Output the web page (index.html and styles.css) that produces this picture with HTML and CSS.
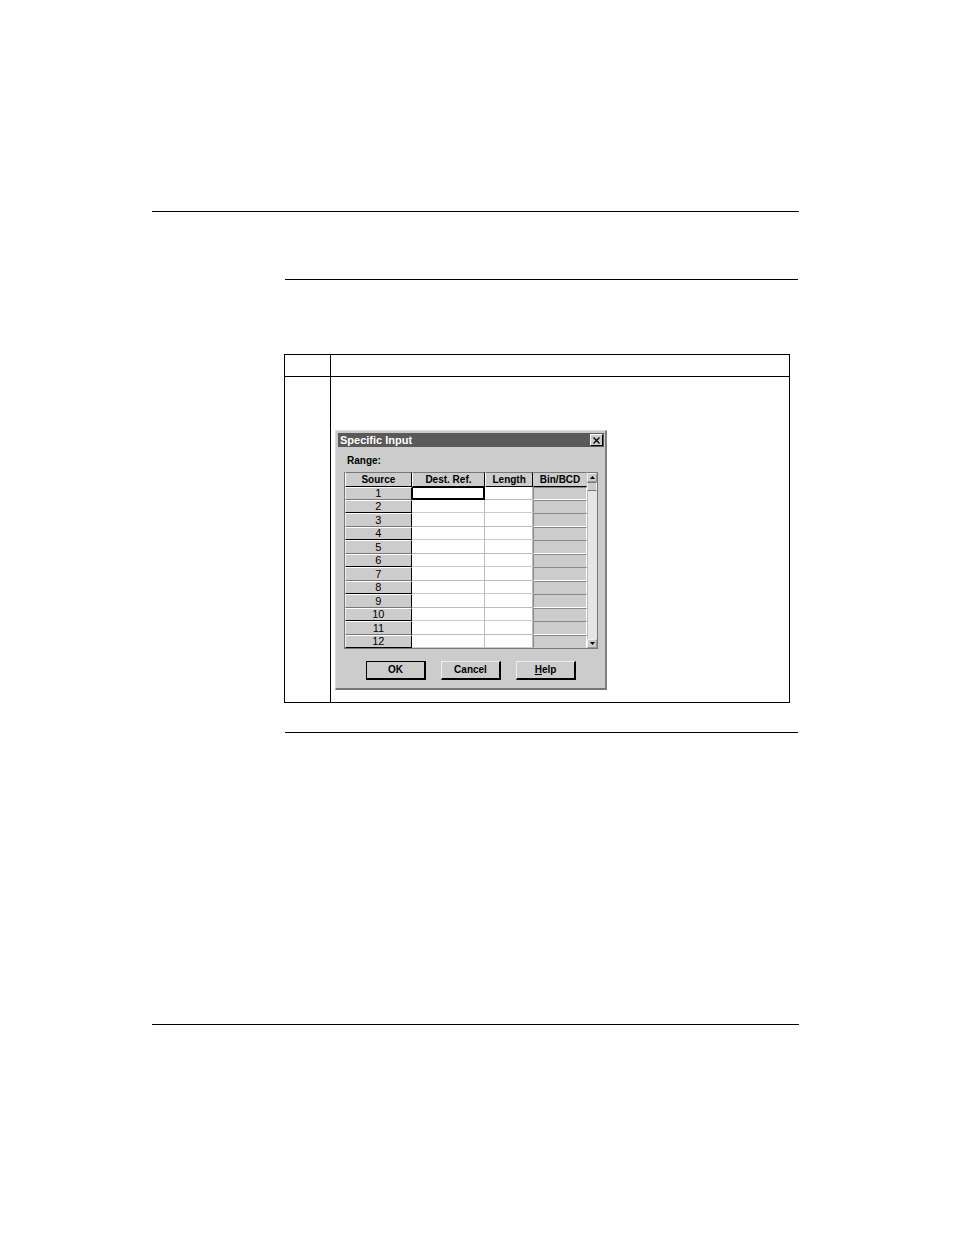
FILE: index.html
```html
<!DOCTYPE html>
<html lang="en">
<head>
<meta charset="utf-8">
<title>Specific Input</title>
<link rel="stylesheet" href="styles.css">
</head>
<body>
<main class="page">
  <div class="content">
    <section class="steps">
      <div class="steps-head"><div class="step-number"></div><div class="step-action"></div></div>
      <div class="steps-row">
        <div class="step-number"></div>
        <div class="step-action">
          <form class="dialog">
            <header class="title-bar">
              <h1 class="title">Specific Input</h1>
              <button class="close" type="button" aria-label="Close"><svg width="7" height="7" viewBox="0 0 7 7"><path d="M.5 .5L6.5 6.5M6.5 .5L.5 6.5" stroke="#000" stroke-width="1.3"/></svg></button>
            </header>
            <p class="range">Range:</p>
            <div class="grid-frame">
              <table class="grid">
                <thead><tr><th class="source">Source</th><th class="dest">Dest. Ref.</th><th class="length">Length</th><th class="format">Bin/BCD</th></tr></thead>
                <tbody id="rows"></tbody>
              </table>
              <div class="scrollbar">
                <button class="arrow" type="button" aria-label="Scroll up"><svg width="5" height="3" viewBox="0 0 5 3"><path d="M0 3L2.500 0L5 3Z"/></svg></button>
                <div class="thumb"></div>
                <div class="track"></div>
                <button class="arrow" type="button" aria-label="Scroll down"><svg width="5" height="3" viewBox="0 0 5 3"><path d="M0 0L2.500 3L5 0Z"/></svg></button>
              </div>
            </div>
            <div class="actions">
              <button class="action default" type="button">OK</button>
              <button class="action" type="button">Cancel</button>
              <button class="action" type="button"><u>H</u>elp</button>
            </div>
          </form>
        </div>
      </div>
    </section>
  </div>
</main>
<script src="grid.js"></script>
</body>
</html>
```
FILE: styles.css
```css
* { box-sizing: border-box; }
body { margin: 0; background: #fff; font-family: "Liberation Sans", Arial, sans-serif; font-size: 10px; color: #000; }
button { font: inherit; color: inherit; padding: 0; border-radius: 0; }
svg { display: block; }

.page { margin: 211px 155px 0 152px; padding: 67px 0 291px; border-top: 1px solid #000; border-bottom: 1px solid #000; }
.content { margin: 0 1px 0 133px; padding: 74px 0 29px; border-top: 1px solid #000; border-bottom: 1px solid #000; }
.steps { margin: 0 8px 0 -1px; border: 1px solid #000; }
.steps-head, .steps-row { display: grid; grid-template-columns: 46px 1fr; }
.steps-head { height: 22px; border-bottom: 1px solid #000; }
.step-number { border-right: 1px solid #000; }
.steps-row .step-action { padding: 53px 4px 12px; }

.dialog { width: 272px; padding: 1px 0 8px 1px; background: #ccc; border: 1px solid #ddd; border-right: 2px solid #808080; border-bottom: 2px solid #777; }
.title-bar { display: flex; align-items: center; justify-content: space-between; height: 14px; margin: 1px 1px 0; padding: 0 1px 0 2px; background: #5a5a5a; }
.title { margin: 0; font-size: 11px; line-height: 14px; color: #fff; }
.close { display: grid; place-items: center; width: 13px; height: 12px; background: #ccc; border: 1px solid #fff; border-right-color: #000; border-bottom-color: #000; }
.range { margin: 8px 0 5px 10px; line-height: 12px; font-weight: bold; }

.grid-frame { display: flex; width: 254px; margin-left: 7px; border-bottom: 1px solid #777; }
.grid { flex: 1; table-layout: fixed; border-collapse: separate; border-spacing: 0; border-left: 1px solid #777; }
.grid th, .grid td { padding: 0; height: 13px; line-height: 12px; text-align: center; overflow: hidden; }
.grid thead th { height: 15px; background: #ccc; border: 1px solid #000; border-left-color: #fff; border-top-color: #777; line-height: 13px; }
.grid thead .format { border-left-color: #ccc; border-right-color: #ccc; }
.grid tbody tr:nth-child(odd):not(:first-child) > * { height: 14px; }
.grid .source { width: 67px; }
.grid .dest { width: 74px; }
.grid .length { width: 48px; }
.grid .format { width: 54px; }
.grid tbody th { background: #ccc; font-size: 11px; font-weight: normal; line-height: 11px; border: 1px solid #000; border-top-color: #fff; border-left-color: #eee; }
.grid tbody tr:nth-child(odd) th { border-bottom-color: #777; }
.grid td { border-right: 1px solid #bbb; border-bottom: 1px solid #bbb; background: #fff; }
.grid tr:nth-child(even) td { border-bottom-color: #ccc; }
.grid td.format-cell { background: #ccc; border: 1px solid #fff; border-top-color: #888; border-left-color: #888; }
.cell { display: block; width: 100%; height: 11px; padding: 0; border: 0; background: #fff; font: inherit; outline: 0; }
.grid tbody tr:first-child td.dest-cell { border: 2px solid #000; border-left-width: 1px; border-top-width: 1px; }
.grid tbody tr:first-child .dest-cell .cell { height: 10px; }

.scrollbar { display: flex; flex-direction: column; width: 11px; border-right: 1px solid #777; border-top: 1px solid #777; background: #e6e6e6; }
.arrow { display: grid; place-items: center; height: 9px; background: #ccc; border: 1px solid #eee; border-right-color: #999; border-bottom-color: #999; }
.thumb { height: 9px; background: #ccc; border: 1px solid #eee; border-bottom-color: #777; border-top-color: #777; }
.track { flex: 1; border-left: 1px solid #bbb; }

.actions { display: flex; gap: 15px; margin: 12px 0 0 29px; }
.action { width: 60px; height: 19px; background: #ccc; border: 1px solid #eee; border-right: 2px solid #000; border-bottom: 2px solid #000; font-weight: bold; line-height: 14px; }
.action.default { border-top-color: #000; border-left-color: #000; }
```
FILE: grid.js
```javascript
const rows = document.getElementById("rows");
for (let n = 1; n <= 12; n++) {
  rows.insertAdjacentHTML("beforeend",
    `<tr><th scope="row">${n}</th>
     <td class="dest-cell"><input class="cell" type="text" aria-label="Destination reference ${n}"></td>
     <td><input class="cell" type="text" aria-label="Length ${n}"></td>
     <td class="format-cell"></td></tr>`);
}
```
